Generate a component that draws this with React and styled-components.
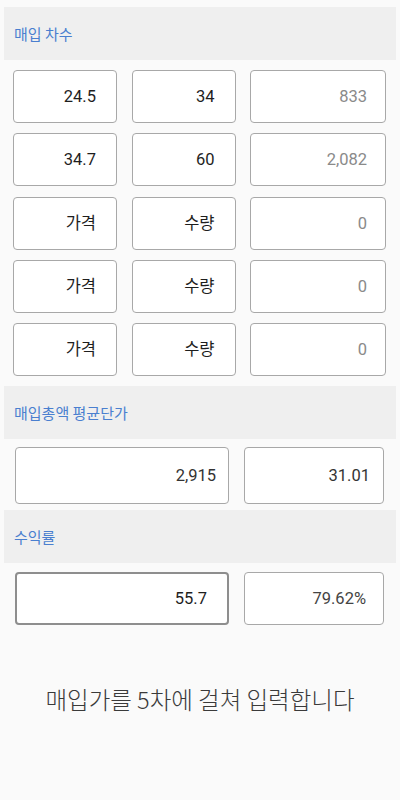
import React, { useState } from "react";
import styled, { createGlobalStyle } from "styled-components";

const GlobalStyle = createGlobalStyle`
  html, body {
    margin: 0;
    padding: 0;
    background: #fafafa;
  }
  body {
    font-family: Roboto, "Noto Sans CJK KR", sans-serif;
  }
  * {
    box-sizing: border-box;
  }
`;

const Page = styled.div`
  width: 400px;
  min-height: 800px;
  padding: 7px 4px 0 4px;
  display: flex;
  flex-direction: column;
`;

const SectionHeader = styled.div`
  height: 53px;
  background: #efefef;
  display: flex;
  align-items: center;
  padding-left: 10px;
  padding-bottom: 1px;
  font-family: "Noto Sans CJK KR", sans-serif;
  font-size: 15px;
  color: #4a7fcf;
  margin-top: ${(p) => p.$top || 0}px;
`;

const RoundGrid = styled.div`
  display: grid;
  grid-template-columns: 104px 104px 136px;
  column-gap: 14.5px;
  row-gap: 10.3px;
  padding: 10px 0 0 9px;
`;

const PairRow = styled.div`
  display: grid;
  grid-template-columns: 214px 140px;
  column-gap: 15px;
  padding-left: 11px;
  margin-top: ${(p) => p.$top}px;
`;

const Field = styled.input`
  width: 100%;
  height: ${(p) => p.$h || 53}px;
  border: ${(p) => (p.$focused ? "2px solid #8e8e8e" : "1px solid #a8a8a8")};
  border-radius: 4px;
  background: #fff;
  text-align: right;
  padding: 0 ${(p) => p.$pad || 20}px 0 0;
  font-family: Roboto, "Noto Sans CJK KR", sans-serif;
  font-size: 16.5px;
  font-weight: 400;
  color: ${(p) => p.$color || "#1e1e1e"};
  outline: none;
  &::placeholder {
    color: #1e1e1e;
  }
`;

const Notice = styled.p`
  margin: 57px 0 0 0;
  text-align: center;
  font-family: "Noto Sans CJK KR", sans-serif;
  font-weight: 300;
  font-size: 23.5px;
  color: #3a3a3a;
`;

const initialRounds = [
  { price: "24.5", qty: "34", total: "833" },
  { price: "34.7", qty: "60", total: "2,082" },
  { price: "", qty: "", total: "0" },
  { price: "", qty: "", total: "0" },
  { price: "", qty: "", total: "0" },
];

const App = () => {
  const [rounds, setRounds] = useState(initialRounds);
  const [target, setTarget] = useState("55.7");

  const update = (i, key, value) => {
    setRounds(rounds.map((r, idx) => (idx === i ? { ...r, [key]: value } : r)));
  };

  return (
    <>
      <GlobalStyle />
      <Page>
        <SectionHeader>매입 차수</SectionHeader>
        <RoundGrid>
          {rounds.map((r, i) => (
            <React.Fragment key={i}>
              <Field
                value={r.price}
                placeholder="가격"
                onChange={(e) => update(i, "price", e.target.value)}
              />
              <Field
                value={r.qty}
                placeholder="수량"
                onChange={(e) => update(i, "qty", e.target.value)}
              />
              <Field value={r.total} readOnly $color="#8a8a8a" $pad={18} />
            </React.Fragment>
          ))}
        </RoundGrid>

        <SectionHeader $top={10}>매입총액 평균단가</SectionHeader>
        <PairRow $top={8}>
          <Field value="2,915" readOnly $h={57} $pad={12} $color="#333" />
          <Field value="31.01" readOnly $h={57} $pad={13} $color="#333" />
        </PairRow>

        <SectionHeader $top={6}>수익률</SectionHeader>
        <PairRow $top={9}>
          <Field
            value={target}
            onChange={(e) => setTarget(e.target.value)}
            $focused
            $h={53}
            $pad={20}
          />
          <Field value="79.62%" readOnly $h={53} $pad={17} $color="#444" />
        </PairRow>

        <Notice>매입가를 5차에 걸쳐 입력합니다</Notice>
      </Page>
    </>
  );
};

export default App;
